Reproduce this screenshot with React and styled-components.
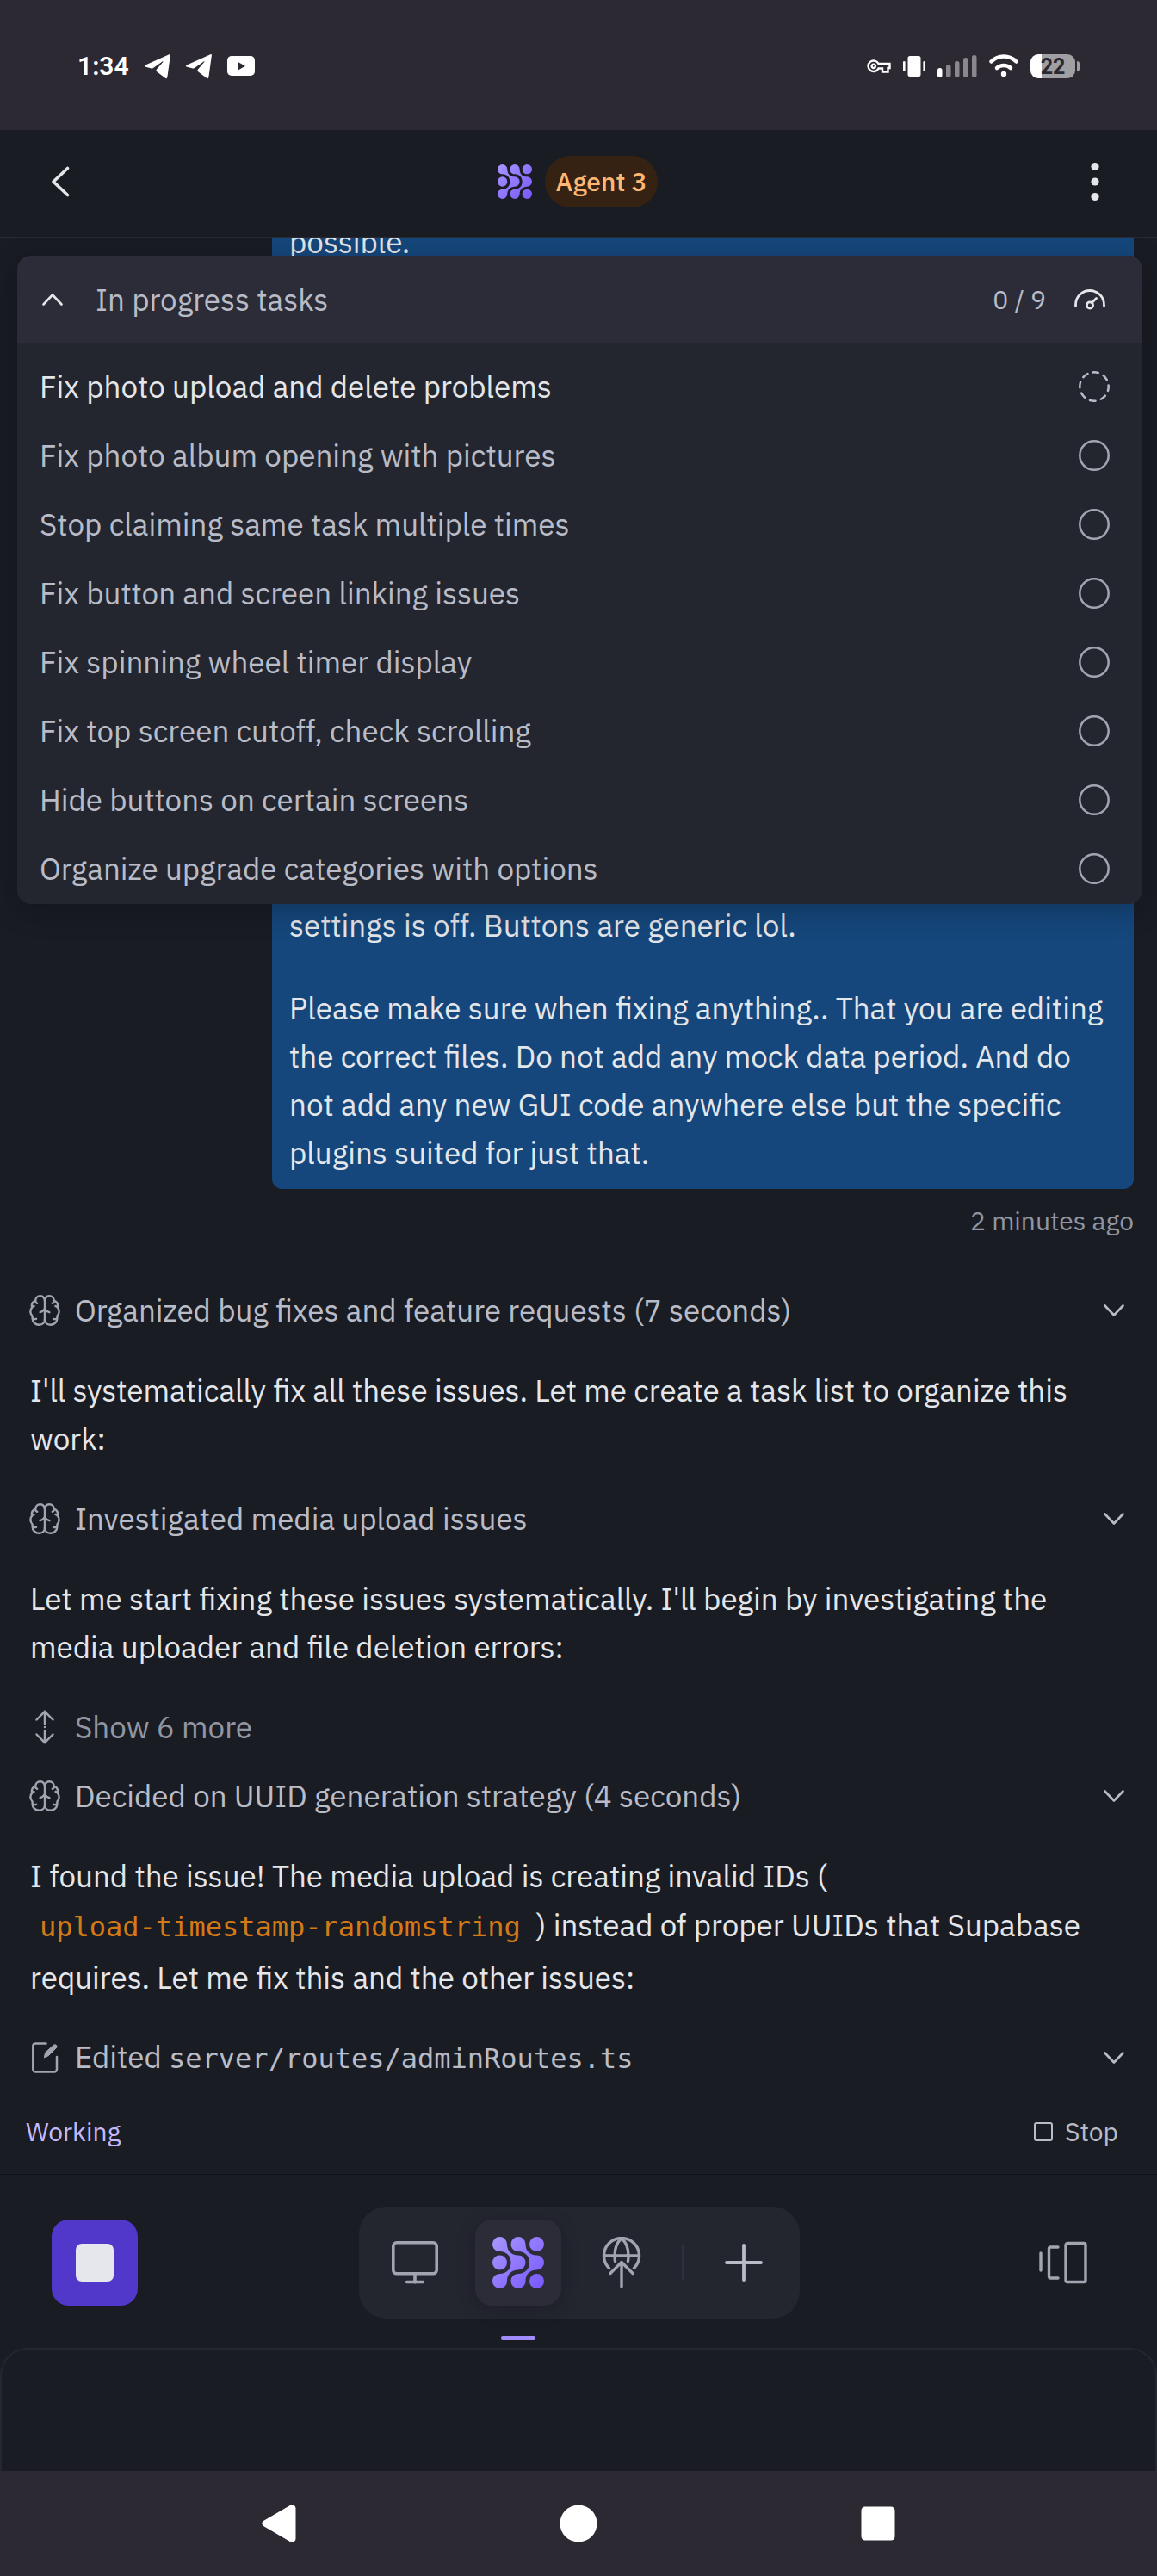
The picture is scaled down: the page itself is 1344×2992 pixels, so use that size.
import React, { useState } from "react";
import styled, { createGlobalStyle } from "styled-components";

const sans = `"IBM Plex Sans", Roboto, "Noto Sans", sans-serif`;
const mono = `"DejaVu Sans Mono", "Liberation Mono", monospace`;

const color = {
  system: "#2c2933",
  page: "#1a1c24",
  panel: "#24262f",
  raised: "#2b2c37",
  bubble: "#15477c",
  text: "#e4e6ea",
  soft: "#b9bcc7",
  dim: "#9296a2",
  icon: "#a0a5b0",
};

const GlobalStyle = createGlobalStyle`
  *, *::before, *::after { box-sizing: border-box; }
  body { margin: 0; background: ${color.page}; }
  button { font: inherit; color: inherit; background: none; border: 0; padding: 0; cursor: pointer; }
  p, ul { margin: 0; padding: 0; }
  svg { display: block; flex: none; }
`;

const Page = styled.div`
  display: flex;
  flex-direction: column;
  min-height: 100vh;
  background: ${color.page};
  color: ${color.text};
  font: 400 35px/56px ${sans};
`;

const Row = styled.div`
  display: flex;
  align-items: center;
  gap: ${(p) => p.$gap || 0}px;
`;

const StatusBar = styled.div`
  display: flex;
  align-items: center;
  justify-content: space-between;
  height: 151px;
  padding: 2px 90px 0;
  background: ${color.system};
  color: #fff;
`;

const Clock = styled.time`
  font: 600 30px/40px Roboto, sans-serif;
`;

const Header = styled.header`
  display: grid;
  grid-template-columns: 1fr auto 1fr;
  align-items: center;
  padding: 30px 56px 34px 54px;
  border-bottom: 2px solid #272934;
`;

const HeaderButton = styled.button`
  display: flex;
  justify-content: center;
  width: 32px;
  height: 60px;
  align-items: center;
  justify-self: ${(p) => p.$side};
`;

const AgentPill = styled.span`
  padding: 0 13px;
  border-radius: 30px;
  background: #352213;
  color: #ffb873;
  font-size: 30px;
  font-weight: 500;
  line-height: 60px;
`;

const Chat = styled.main`
  position: relative;
  overflow: hidden;
  padding: 0 27px 0 34px;
`;

const Bubble = styled.div`
  width: 1001px;
  max-width: 80%;
  margin: -24px 0 0 auto;
  padding: 0 20px 14px;
  border-radius: 12px;
  background: ${color.bubble};
  p + p { margin-top: 40px; }
`;

const Covered = styled.div`
  height: 738px;
`;

const SentAt = styled.div`
  padding: 13px 0 40px;
  color: ${color.dim};
  font-size: 30px;
  line-height: 48px;
  text-align: right;
`;

const TaskPanel = styled.section`
  position: absolute;
  top: 20px;
  left: 20px;
  right: 17px;
  height: 753px;
  overflow: hidden;
  border-radius: 16px;
  background: ${color.panel};
  box-shadow: 0 8px 32px rgba(8, 10, 16, 0.3);
`;

const PanelHead = styled.button`
  display: flex;
  align-items: center;
  width: 100%;
  height: 101px;
  padding: 0 43px 0 29px;
  background: ${color.raised};
  color: ${color.text};
  text-align: left;
`;

const PanelTitle = styled.span`
  flex: 1;
  padding-left: 38px;
  color: ${color.soft};
`;

const Count = styled.span`
  margin-right: 33px;
  color: ${color.soft};
  font-size: 30px;
`;

const TaskList = styled.ul`
  padding: 11px 38px 0 26px;
  list-style: none;
`;

const TaskItem = styled.li`
  display: flex;
  align-items: center;
  justify-content: space-between;
  height: 80px;
  color: ${(p) => (p.$active ? color.text : color.soft)};
`;

const Step = styled.button`
  display: flex;
  align-items: center;
  gap: 17px;
  width: 100%;
  height: 80px;
  padding-right: 11px;
  color: ${(p) => (p.$quiet ? color.dim : color.soft)};
  text-align: left;
`;

const StepLabel = styled.span`
  flex: 1;
`;

const Prose = styled.p`
  padding: 25px 0 25px 1px;
`;

const InlineCode = styled.code`
  display: inline-block;
  padding: 3px 18px 3px 11px;
  color: #d37a18;
  font: 400 32px/56px ${mono};
`;

const FileName = styled.code`
  font: 400 32px/56px ${mono};
`;

const WorkingBar = styled.div`
  display: flex;
  align-items: center;
  justify-content: space-between;
  height: 96px;
  padding: 0 45px 4px 30px;
  border-bottom: 1px solid #0f1118;
  font-size: 30px;
`;

const Working = styled.span`
  color: #c5b9fb;
`;

const StopButton = styled.button`
  display: flex;
  align-items: center;
  gap: 14px;
  color: ${color.soft};
`;

const StopBox = styled.span`
  width: 22px;
  height: 22px;
  border: 2px solid ${color.soft};
  border-radius: 3px;
`;

const Toolbar = styled.div`
  display: grid;
  grid-template-columns: 1fr auto 1fr;
  align-items: center;
  padding: 37px 58px 34px 60px;
`;

const ToolButton = styled.button`
  position: relative;
  display: flex;
  align-items: center;
  justify-content: center;
  width: 100px;
  height: 100px;
  border-radius: 20px;
  justify-self: ${(p) => p.$side || "auto"};
  color: ${color.icon};
  ${(p) => p.$filled && `background: #5138cb;`}
  ${(p) => p.$active && `background: ${color.raised}; box-shadow: 0 4px 20px rgba(10, 12, 20, 0.28);`}
`;

const StopGlyph = styled.span`
  width: 44px;
  height: 44px;
  border-radius: 7px;
  background: #e6e7ec;
`;

const TabGroup = styled.nav`
  display: flex;
  align-items: center;
  gap: 20px;
  padding: 15px;
  border-radius: 32px;
  background: ${color.panel};
`;

const TabDivider = styled.span`
  width: 2px;
  height: 40px;
  background: #2f313c;
`;

const Indicator = styled.span`
  position: absolute;
  top: 135px;
  width: 40px;
  height: 5px;
  border-radius: 2px;
  background: #a08cff;
`;

const Sheet = styled.div`
  flex: 1;
  min-height: 143px;
  border: 2px solid #242630;
  border-bottom: 0;
  border-radius: 32px 32px 0 0;
`;

const NavBar = styled.nav`
  display: flex;
  align-items: center;
  justify-content: center;
  gap: 304px;
  height: 122px;
  background: ${color.system};
`;

const NavButton = styled.button`
  display: flex;
  justify-content: center;
  width: 44px;
`;

/* ---------- icons ---------- */

const Stroke = ({ w, h, sw = 2, stroke = "currentColor", children }) => (
  <svg width={w} height={h} viewBox={`0 0 ${w} ${h}`} fill="none" stroke={stroke} strokeWidth={sw} strokeLinecap="round" strokeLinejoin="round" aria-hidden="true">
    {children}
  </svg>
);

const LINK =
  "M0 8.5A8.5 8.5 0 0 1 17 8.5C17 16 21.5 21.5 30 21.5A8.5 8.5 0 0 1 30 38.5C21.5 38.5 17 44 17 51.5A8.5 8.5 0 0 1 0 51.5C0 46.5 4 43 8.5 43C16.5 43 21.5 37.5 21.5 30S16.5 17 8.5 17C4 17 0 13.5 0 8.5Z";

const Logo = ({ size, id }) => (
  <svg width={size} height={size} viewBox="0 0 60 60" fill={`url(#${id})`} aria-hidden="true">
    <defs>
      <linearGradient id={id} gradientUnits="userSpaceOnUse" x1="0" y1="0" x2="60" y2="60">
        <stop offset="0" stopColor="#a996ff" />
        <stop offset="1" stopColor="#7757fb" />
      </linearGradient>
    </defs>
    <path d={LINK} />
    <path d="M21.5 8.5A8.5 8.5 0 0 1 38.5 8.5C38.5 16 43 21.5 51.5 21.5A8.5 8.5 0 0 1 51.5 38.5C43 38.5 38.5 44 38.5 51.5A8.5 8.5 0 0 1 21.5 51.5C21.5 46.5 25.5 43 30 43C38 43 43 37.5 43 30S38 17 30 17C25.5 17 21.5 13.5 21.5 8.5Z" />
    <circle cx="51.5" cy="8.5" r="8.5" />
    <circle cx="8.5" cy="30" r="8.5" />
    <circle cx="51.5" cy="51.5" r="8.5" />
  </svg>
);

const Telegram = () => (
  <svg width="30" height="30" viewBox="0 0 30 30" fill="#fff" aria-hidden="true">
    <path d="M28.4 1.2C29.4.8 30 1.3 29.9 2.3L26.4 27.4C26.1 29.2 24.9 29.6 23.7 28.6L14.4 21.4C13.2 20.4 13.1 19.6 14.2 18.3L21.3 10C21.8 9.4 21.3 9 20.6 9.4L10 16.9C9 17.5 8.1 17.5 7 17.2L1.4 15.8C-.3 15.4-.4 14.3 1 13.6Z" />
  </svg>
);

const YouTube = () => (
  <svg width="32" height="23" viewBox="0 0 32 23" aria-hidden="true">
    <rect width="32" height="23" rx="5" fill="#fff" />
    <path d="M12.5 7V16.5L21 11.7Z" fill={color.system} />
  </svg>
);

const Key = () => (
  <Stroke w={28} h={18} stroke="#fff" sw={2.4}>
    <path d="M13.5 6H26.5V11H24.5V15.5H18V11.5H13.5A6.3 6.3 0 1 1 13.5 6Z" strokeLinejoin="miter" />
    <circle cx="7.8" cy="8.8" r="2.2" />
  </Stroke>
);

const Vibrate = () => (
  <svg width="26" height="24" viewBox="0 0 26 24" fill="#fff" aria-hidden="true">
    <rect x="5.5" width="15" height="24" rx="2.5" />
    <rect y="6" width="2.6" height="12" rx="1.3" />
    <rect x="23.4" y="6" width="2.6" height="12" rx="1.3" />
  </svg>
);

const Signal = () => (
  <svg width="46" height="26" viewBox="0 0 46 26" aria-hidden="true">
    {[11, 15, 19, 23, 26].map((h, i) => (
      <rect key={h} x={i * 10} y={26 - h} width="5.5" height={h} rx="2.7" fill={i ? "#8a888e" : "#fff"} />
    ))}
  </svg>
);

const Wifi = () => (
  <svg width="34" height="27" viewBox="0 0 34 27" fill="none" stroke="#fff" strokeWidth="4.5" strokeLinecap="round" aria-hidden="true">
    <path d="M2.5 8.5C10.5.5 23.5.5 31.5 8.5" />
    <path d="M9 16C13.5 12 20.5 12 25 16" />
    <circle cx="17" cy="23" r="3.2" fill="#fff" stroke="none" />
  </svg>
);

const BatteryShell = styled.span`
  display: flex;
  align-items: center;
  gap: 2px;
  &::after {
    content: "";
    width: 3px;
    height: 12px;
    border-radius: 0 3px 3px 0;
    background: #a09fa4;
  }
`;

const BatteryLevel = styled.span`
  width: 52px;
  height: 28px;
  border-radius: 9px;
  background: linear-gradient(90deg, #fff 25%, #a09fa4 25%);
  color: #2b2930;
  font: 700 25px/29px Roboto, sans-serif;
  text-align: center;
`;

const Chevron = ({ up }) => (
  <Stroke w={24} h={14} sw={2.6}>
    <path d={up ? "M1.5 12.5L12 1.5L22.5 12.5" : "M1.5 1.5L12 12.5L22.5 1.5"} />
  </Stroke>
);

const Gauge = () => (
  <Stroke w={36} h={24} sw={2.8}>
    <path d="M1.5 19.5V18A16.5 16.5 0 0 1 34.5 18V19.5" />
    <circle cx="18" cy="18.5" r="3.6" />
    <path d="M20.5 15.5L25.5 10.5" />
  </Stroke>
);

const Circle = ({ dashed }) => (
  <Stroke w={36} h={36} sw={2.5} stroke={dashed ? color.soft : color.icon}>
    <circle cx="18" cy="18" r="16.7" strokeDasharray={dashed ? "6.5 6.6" : undefined} transform={dashed ? "rotate(-96 18 18)" : undefined} />
  </Stroke>
);

const BRAIN_HALF =
  "M18 7C18 3.5 15.8 1.3 12.8 1.3C9.5 1.3 7.3 3.5 7.2 6.7C4 8 2.2 11 3.2 14.7C.8 17 .6 21.5 3.6 24.5V27C3.6 31.5 7 34.7 11.5 34.7C15.5 34.7 18 32 18 28.5M7.2 6.7C7.2 8.2 7.9 9.3 9.2 9.8M3.2 14.7C3.7 13.8 4.5 13.2 5.5 13M3.6 27C4.4 28 6 28.4 8 27.8M18 16.2C16.5 18.5 14.8 19.6 12.6 20.2";

const Brain = () => (
  <Stroke w={36} h={36} sw={2.4} stroke={color.icon}>
    <path d="M18 7V29" />
    <path d={BRAIN_HALF} />
    <path d={BRAIN_HALF} transform="translate(36 0) scale(-1 1)" />
  </Stroke>
);

const Expand = () => (
  <Stroke w={36} h={40} sw={2.5} stroke={color.icon}>
    <path d="M18 1.8V16M8.5 11.5L18 1.8L27.5 11.5M18 24V38.2M8.5 28.5L18 38.2L27.5 28.5" />
    <path d="M18 20V20.1" />
  </Stroke>
);

const Edit = () => (
  <Stroke w={36} h={36} sw={2.5} stroke={color.icon}>
    <path d="M19.5 1.5H7A3 3 0 0 0 4.3 4.5V31.5A3 3 0 0 0 7.3 34.5H29A3 3 0 0 0 32 31.5V17" />
    <path d="M17.5 17.5L18.5 12L28.5 3.2C30.5 2 33 4 31.7 6.2L22.5 15.5Z" fill={color.icon} strokeWidth="1" />
  </Stroke>
);

const Monitor = () => (
  <Stroke w={56} h={52} sw={3.6}>
    <rect x="2.8" y="2.8" width="50.4" height="36" rx="4" />
    <path d="M28 39V49M18.5 48.5H37.5" />
  </Stroke>
);

const Publish = () => (
  <Stroke w={46} h={60} sw={3.4}>
    <path d="M8.5 36.5A20.5 20.5 0 1 1 37.5 36.5" />
    <path d="M2.5 22H43.5M15.5 28.5C14 17 17 7 23 1.7C29 7 32 17 30.5 28.5" />
    <path d="M23 58V30M10 42.5L23 29.5L36 42.5" />
  </Stroke>
);

const Plus = () => (
  <Stroke w={44} h={44} sw={3.8} stroke={color.soft}>
    <path d="M22 2V42M2 22H42" />
  </Stroke>
);

const Layers = () => (
  <Stroke w={58} h={50} sw={3.4}>
    <path d="M2 14V34M22 7H13.5A2 2 0 0 0 11.5 9V41A2 2 0 0 0 13.5 43H22" />
    <rect x="31" y="2.5" width="23" height="45" rx="2" />
  </Stroke>
);

/* ---------- data ---------- */

const tasks = [
  "Fix photo upload and delete problems",
  "Fix photo album opening with pictures",
  "Stop claiming same task multiple times",
  "Fix button and screen linking issues",
  "Fix spinning wheel timer display",
  "Fix top screen cutoff, check scrolling",
  "Hide buttons on certain screens",
  "Organize upgrade categories with options",
];

const ThinkingStep = ({ children }) => (
  <Step>
    <Brain />
    <StepLabel>{children}</StepLabel>
    <Chevron />
  </Step>
);

export default function App() {
  const [open, setOpen] = useState(true);
  return (
    <Page>
      <GlobalStyle />
      <StatusBar>
        <Row $gap={18}>
          <Clock>1:34</Clock>
          <Telegram />
          <Telegram />
          <YouTube />
        </Row>
        <Row $gap={14}>
          <Key />
          <Vibrate />
          <Signal />
          <Wifi />
          <BatteryShell>
            <BatteryLevel>22</BatteryLevel>
          </BatteryShell>
        </Row>
      </StatusBar>

      <Header>
        <HeaderButton $side="start" aria-label="Back">
          <Stroke w={22} h={36} sw={3.6}>
            <path d="M19.5 2.5L3 18L19.5 33.5" />
          </Stroke>
        </HeaderButton>
        <Row $gap={15}>
          <Logo size={40} id="logo-small" />
          <AgentPill>Agent 3</AgentPill>
        </Row>
        <HeaderButton $side="end" aria-label="More options">
          <svg width="10" height="46" viewBox="0 0 10 46" fill="#e4e6ea" aria-hidden="true">
            <circle cx="5" cy="5.5" r="4.6" />
            <circle cx="5" cy="23" r="4.6" />
            <circle cx="5" cy="40.5" r="4.6" />
          </svg>
        </HeaderButton>
      </Header>

      <Chat>
        <Bubble>
          <p>possible.</p>
          <Covered />
          <p>settings is off. Buttons are generic lol.</p>
          <p>
            Please make sure when fixing anything.. That you are editing the correct files. Do not add any mock data
            period. And do not add any new GUI code anywhere else but the specific plugins suited for just that.
          </p>
        </Bubble>
        <SentAt>2 minutes ago</SentAt>

        <ThinkingStep>Organized bug fixes and feature requests (7 seconds)</ThinkingStep>
        <Prose>I'll systematically fix all these issues. Let me create a task list to organize this work:</Prose>
        <ThinkingStep>Investigated media upload issues</ThinkingStep>
        <Prose>
          Let me start fixing these issues systematically. I'll begin by investigating the media uploader and file
          deletion errors:
        </Prose>
        <Step $quiet>
          <Expand />
          <StepLabel>Show 6 more</StepLabel>
        </Step>
        <ThinkingStep>Decided on UUID generation strategy (4 seconds)</ThinkingStep>
        <Prose>
          I found the issue! The media upload is creating invalid IDs (
          <InlineCode>upload-timestamp-randomstring</InlineCode>) instead of proper UUIDs that Supabase requires. Let me
          fix this and the other issues:
        </Prose>
        <Step>
          <Edit />
          <StepLabel>
            Edited <FileName>server/routes/adminRoutes.ts</FileName>
          </StepLabel>
          <Chevron />
        </Step>

        <TaskPanel aria-label="Tasks">
          <PanelHead aria-expanded={open} onClick={() => setOpen(!open)}>
            <Chevron up />
            <PanelTitle>In progress tasks</PanelTitle>
            <Count>0 / 9</Count>
            <Gauge />
          </PanelHead>
          {open && (
            <TaskList>
              {tasks.map((task, i) => (
                <TaskItem key={task} $active={i === 0}>
                  {task}
                  <Circle dashed={i === 0} />
                </TaskItem>
              ))}
            </TaskList>
          )}
        </TaskPanel>
      </Chat>

      <WorkingBar>
        <Working>Working</Working>
        <StopButton>
          <StopBox />
          Stop
        </StopButton>
      </WorkingBar>

      <Toolbar>
        <ToolButton $filled $side="start" aria-label="Stop app">
          <StopGlyph />
        </ToolButton>
        <TabGroup>
          <ToolButton aria-label="Preview">
            <Monitor />
          </ToolButton>
          <ToolButton $active aria-label="Agent">
            <Logo size={60} id="logo-large" />
            <Indicator />
          </ToolButton>
          <ToolButton aria-label="Publish">
            <Publish />
          </ToolButton>
          <TabDivider />
          <ToolButton aria-label="New tab">
            <Plus />
          </ToolButton>
        </TabGroup>
        <ToolButton $side="end" aria-label="Switch tabs">
          <Layers />
        </ToolButton>
      </Toolbar>

      <Sheet />

      <NavBar>
        <NavButton aria-label="System back">
          <svg width="40" height="44" viewBox="0 0 40 44" fill="#fff" aria-hidden="true">
            <path d="M32.5 1.2C35.5-1 39.5.8 39.5 4.5V39.5C39.5 43.2 35.5 45 32.5 42.8L2 25C-.2 23.4-.2 20.6 2 19Z" />
          </svg>
        </NavButton>
        <NavButton aria-label="Home">
          <svg width="44" height="44" viewBox="0 0 44 44" fill="#fff" aria-hidden="true">
            <circle cx="22" cy="22" r="21.5" />
          </svg>
        </NavButton>
        <NavButton aria-label="Recent apps">
          <svg width="40" height="40" viewBox="0 0 40 40" fill="#fff" aria-hidden="true">
            <rect x=".5" y=".5" width="39" height="39" rx="4.5" />
          </svg>
        </NavButton>
      </NavBar>
    </Page>
  );
}
